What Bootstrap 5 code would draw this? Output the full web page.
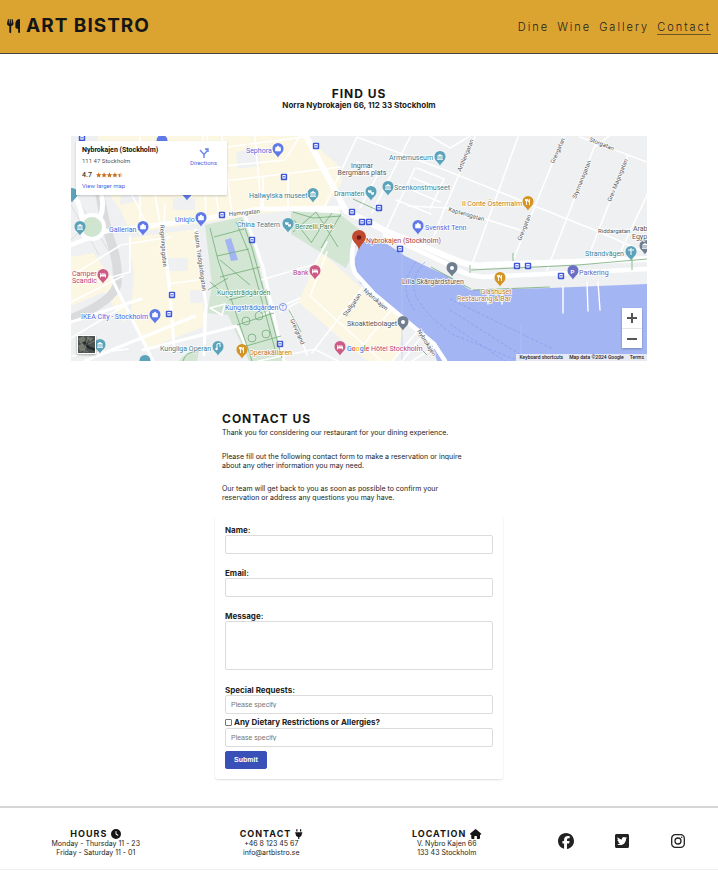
<!DOCTYPE html>
<html lang="en">
<head>
<meta charset="utf-8">
<meta name="viewport" content="width=device-width, initial-scale=1">
<title>Art Bistro – Contact</title>
<link href="https://cdn.jsdelivr.net/npm/bootstrap@5.3.0/dist/css/bootstrap.min.css" rel="stylesheet">
<style>
  body { font-family: Inter, "Open Sans", sans-serif; font-size: 7px; line-height: 9px; color: #222; background: #fff; }
  .site-header { background: #dba330; border-bottom: 1px solid #444; height: 54px; padding: 0 7px 2px; }
  .brand { font-size: 19px; line-height: 24px; font-weight: 700; letter-spacing: 1px; color: #161616; gap: 6px; }
  .brand svg { width: 13px; height: 14px; }
  .site-nav { gap: 8px; margin-top: 5px; }
  .site-nav a { font-size: 11px; line-height: 13px; letter-spacing: 2px; font-weight: 300; color: #222; text-decoration: none; border-bottom: 1px solid transparent; }
  .site-nav a.active { border-bottom-color: #6b5426; }
  h1, h2 { font-size: 12px; line-height: 14px; font-weight: 700; letter-spacing: 1px; color: #161616; margin: 0; }
  .find-us { padding: 33px 71px 0; }
  .address { font-size: 8px; line-height: 9px; font-weight: 700; margin-bottom: 26px; }
  .map-frame { height: 225px; font-family: Roboto, sans-serif; background: #eef0f2; }
  .map-frame > svg { width: 100%; height: 100%; }
  .place-card { top: 5px; left: 5px; width: 151px; height: 54px; background: #fff; box-shadow: 0 1px 2px #0003; padding: 5px 6px; line-height: 9px; }
  .place-name { font-size: 7px; font-weight: 700; color: #111; white-space: nowrap; }
  .map-frame a { color: #4a6ae0; text-decoration: none; font-size: 6px; }
  .place-detail { font-size: 6px; line-height: 11px; color: #555; }
  .rating { font-size: 7px; line-height: 12px; font-weight: 500; color: #333; margin-top: 3px; }
  .rating svg { width: 27px; height: 6px; }
  .directions { padding: 2px 4px 0 0; }
  .zoom-box { right: 5px; bottom: 13px; width: 20px; background: #fff; box-shadow: 0 1px 2px #0004; }
  .zoom-box button { height: 20px; border: 0; background: none; padding: 0; }
  .zoom-box button + button { border-top: 1px solid #e4e4e4; }
  .zoom-box svg { width: 10px; height: 10px; }
  .layer-thumb { left: 6px; bottom: 7px; width: 19px; height: 19px; border: 1px solid #fff; padding: 0; box-shadow: 0 1px 2px #0005; }
  .map-legal { right: 0; bottom: 0; font-size: 5px; line-height: 7px; background: #f1f1f3e0; gap: 6px; padding: 0 3px; }
  .map-legal a, .map-legal span { font-size: 5px; color: #222; font-weight: 500; }
  .contact-us { width: 288px; margin: 51px auto 27px; }
  .intro { padding: 0 7px; margin-bottom: 14px; }
  .intro h2 { margin-bottom: 2px; }
  .intro p { margin-bottom: 14px; max-width: 250px; }
  .intro p:first-of-type { margin-bottom: 15px; }
  .booking-form { padding: 10px; border-radius: 3px; box-shadow: 0 1px 2px #0002; height: auto; }
  .booking-form label { display: block; font-size: 8px; line-height: 9px; font-weight: 700; }
  .booking-form .form-control { font-family: "Liberation Sans", sans-serif; font-size: 7px; line-height: 9px; height: 19px; min-height: 19px; padding: 4px 5px; border: 1px solid #dcdcdc; border-radius: 2px; display: block; }
  .booking-form .form-control::placeholder { color: #757575; }
  .booking-form textarea.form-control { height: 49px; resize: none; margin-bottom: 16px; }
  .field { margin-bottom: 15px; }
  .diet { gap: 2px; margin: 4px 0 1px; }
  .diet input { width: 7px; height: 7px; margin: 0; appearance: none; border: 1px solid #777; border-radius: 1px; background: #fff; }
  .diet input:checked { background: #3850b7; }
  .btn-send { font-family: "Liberation Sans", sans-serif; font-size: 7px; line-height: 10px; font-weight: 700; padding: 3px 8px; margin-top: 4px; border-radius: 2px; background: #3850b7; border-color: #3850b7; color: #fff; }
  .site-footer { border-top: 2px solid #d6d6d6; border-bottom: 1px solid #eee; padding: 21px 8px 12px; text-align: center; }
  .site-footer h2 { font-size: 9px; line-height: 10px; gap: 4px; }
  .site-footer h2 svg { height: 10px; width: auto; }
  .socials { gap: 40px; padding-bottom: 4px; }
  .socials svg { width: 16px; height: 16px; display: block; }
  .socials a { color: #222; }
</style>
</head>
<body>
<header class="site-header d-flex justify-content-between align-items-center">
  <div class="brand d-flex align-items-center">
    <svg viewBox="0 0 448 512" preserveAspectRatio="none" fill="#161616" aria-hidden="true"><path d="M416 0C400 0 288 32 288 176V288c0 35.3 28.7 64 64 64h32V480c0 17.7 14.3 32 32 32s32-14.3 32-32V32c0-17.7-14.3-32-32-32zM64 16C64 7.8 57.9 1 49.7 .1S34.2 4.6 32.4 12.5L2.1 148.8C.7 155.1 0 161.5 0 167.9c0 45.9 35.1 83.6 80 87.7V480c0 17.7 14.3 32 32 32s32-14.3 32-32V255.6c44.9-4.1 80-41.8 80-87.7c0-6.4-.7-12.8-2.1-19.1L191.6 12.5c-1.8-8-9.3-13.3-17.4-12.4S160 7.8 160 16V150.2c0 5.4-4.4 9.8-9.8 9.8c-5.1 0-9.3-3.9-9.8-9L127.9 14.6C127.2 6.3 120.3 0 112 0s-15.2 6.3-15.9 14.6L83.7 151c-.5 5.1-4.7 9-9.8 9c-5.4 0-9.8-4.4-9.8-9.8V16z"/></svg>
    <span>ART BISTRO</span>
  </div>
  <nav class="site-nav d-flex" aria-label="Main">
    <a href="#">Dine</a><a href="#">Wine</a><a href="#">Gallery</a><a href="#" class="active" aria-current="page">Contact</a>
  </nav>
</header>

<main>
<section class="find-us text-center">
  <h1>FIND US</h1>
  <p class="address">Norra Nybrokajen 66, 112 33 Stockholm</p>
  <div class="map-frame position-relative overflow-hidden text-start">
    <svg viewBox="71 136 576 225" preserveAspectRatio="xMidYMid slice" role="img" aria-label="Map of central Stockholm">
      <defs>
        <path id="pin" d="M0 8.500C-1.200 5.500-5.500 4-5.500-.5A5.500 5.500 0 0 1 5.500-.5C5.500 4 1.200 5.500 0 8.500z"/>
        <g id="bag"><path d="M-2.500-1.500h5V2h-5zM-1.200-1.500a1.200 1.400 0 0 1 2.400 0" fill="#fff" stroke="#fff" stroke-width=".6"/></g>
        <g id="museum" fill="#fff"><path d="M-3-1L0-3 3-1v.6h-6zM-2.400 0h1v2h-1zM-.5 0h1v2h-1zM1.400 0h1v2h-1zM-3 2.200h6V3h-6z"/></g>
        <g id="bed" fill="#fff"><path d="M-3-2h.8v2H3v2.400h-.8V1.400h-4.400v1H-3zM-1.700-1.500h3.700q1 .2 1 1.200h-4.700z"/></g>
        <g id="fork" stroke="#fff" stroke-width=".9" fill="none"><path d="M-1.500-3v6M-2.500-3v2h2v-2M1.500 3v-6q-1 1-1 3h1"/></g>
        <g id="mask" fill="#fff"><path d="M-3-2q2 .8 3.500 0v2q-1.500 2-3.500 0zM0 0q2 .8 3 0v2q-1.500 1.700-3 0z"/></g>
        <g id="bus"><rect x="-3.200" y="-3.200" width="6.400" height="6.400" rx="1" fill="#4058d6"/><rect x="-1.600" y="-2" width="3.200" height="3.600" fill="#fff"/><path d="M-1.100-.2h2.200" stroke="#4058d6"/></g>
      </defs>
      <!-- ground -->
      <rect x="71" y="136" width="576" height="225" fill="#eef0f2"/>
      <g fill="#fcf7e3">
        <path d="M98 136h207l32 28 5 18-17 26-58 5-58 9-78 11-10-22-28-40z"/>
        <path d="M71 257l22-4 19 25 20 38-8 6-20-30-33 14z"/>
        <path d="M128 238l68-9 8 84-1 14-57 22-15-37 3-40z"/>
        <path d="M322 252l37 34 36 24 9 20-9 31h-28l-69-59z"/>
      </g>
      <g fill="#eef0f2">
        <path d="M168 258h20v13h-20zM190 290h13v13h-13zM236 152l24-4v18l-22 3zM122 180l20 20-22 5zM173 198h22v12h-22z"/>
      </g>
      <g fill="#d2e6d3">
        <path d="M205 225l37-8 12 29 12 49 18 66h-35l-21-46-21-2 5-28z"/>
        <path d="M291 210l46 2 23 18-3 15-11 23-34-21-21-13z"/>
        <path d="M630 336l17-8v33h-17zM179 361q8-11 20-10l-2 10z"/>
      </g>
      <!-- water -->
      <path d="M360 244l12-5 15 5 18 12 25 12 20 9 20 13 80-2 97-4v77H437l-5-16-39-37-33-25-6-13 1-12z" fill="#a3b5f3"/>
      <path d="M225 240l6-2 7 22-7 1z" fill="#a3b5f3"/>
      <path d="M402 245v116M521 325v36" stroke="#b8c5f5" stroke-width=".6"/>
      <g fill="none" stroke="#8396e8" stroke-width=".6" stroke-dasharray="3 2">
        <path d="M425 262q-18 20-7 38t36 35l65 26M416 262q-20 25 0 50M450 299l103 50M450 324l55 37M450 310l80 51"/>
      </g>
      <!-- railway -->
      <g fill="none" stroke="#dadbdd" stroke-width="9"><path d="M100 195q5 30 12 50t5 40q-4 16-46 34"/></g>
      <path d="M71 205l28 50M75 195l36 60M71 240l20-20" stroke="#dcdddf" stroke-width="1" fill="none"/>
      <!-- streets -->
      <g fill="none" stroke="#fff" stroke-linecap="round" stroke-linejoin="round">
        <g stroke-width="1.600">
          <path d="M227 147l78-10M225 181l115-14M263 177v32M288 173v34M357 137l-34 73M379 172l-19 36M357 137l93 35 147 59 50 22M373 170l-16-8M378 175l-26-12"/>
          <path d="M207 136l12 78M222 136l10 78M140 137v97M155 195l9 50 10 95M163 245l2-40M115 161l30 60"/>
          <path d="M203 136l3 76M255 136l6 70M168 284l36-5M71 276l50-31 50-8M112 277l18-5v-36M71 302l52-26M71 338l60-36M128 349l-56 7M300 136l-15 24-80 8"/>
          <path d="M410 137l-38 76M475 137l-32 75-9 24M518 137l-48 133M563 137l-49 121M597 140l-50 130M628 155l-39 100M647 195l-28 60M415 168l-28 60M580 137l67 25M609 136l-13 10M400 185l40 17M396 200l35 14M417 168l27 11-14 30M413 178l25 10M450 208l70 22M408 206l42 2M470 136l-20 12-20-12"/>
          <path d="M261 280l54-16 12-22M327 252l-17 44 72 65M362 288l-50 65M391 310l-26 33M417 332l-25 29M424 334l-22 27M412 361l23-14M290 310l17 45M262 315l38-17M298 302l-18 10"/>
          <path d="M204 341v-28M210 308l12 7 3-11zM258 361l58-12M316 350l22 11"/>
        </g>
        <path stroke-width="3" d="M111 277l42 84M143 350l94-24 8 18M163 235l6 45 5 65M196 230l10 75-2 50M245 215l18 52 21 94M338 212l-58-3M71 322l70-23M85 361l110-45"/>
        <path stroke-width="4.500" d="M71 245l36-14 97-12 54-10 82-1"/>
        <circle cx="92" cy="227" r="12" stroke-width="4"/>
        <path stroke-width="5" d="M82 218q-2-18-11-25M100 218q8-20-8-46"/>
        <path stroke-width="6" d="M306 136l40 75 40 20 70 29q15 7 30 5l161-6"/>
        <path stroke-width="4.500" d="M357 232q-9 25-2 41l19 21 60 50 11 17M385 235l60 28q20 13 38 14l164-8"/>
        <path stroke-width="1.400" d="M563 287v26M587 282l1 29M598 282l2 28M488 295v9M502 295v9"/>
      </g>
      <circle cx="92" cy="227" r="10" fill="#cfe5d0"/>
      <!-- park paths -->
      <g fill="none" stroke="#74ac79" stroke-width=".8">
        <path d="M210 228l8 32 34 101M236 222l13 31 27 100M242 220l10 28 30 110M217 256l32-7M214 237l30-8M220 277l40-10M229 300l38-10M237 325l37-12M246 346l35-10M220 260l30 25M208 290l20-12M210 282l18 16"/>
        <circle cx="246" cy="321" r="4"/><circle cx="259" cy="316" r="4"/><circle cx="252" cy="338" r="4"/><circle cx="266" cy="334" r="4"/>
        <path d="M293 212l20 6 28-2M293 232l23-20 22 35M300 226l20 3 12-16M320 229l-9 14M341 214l-20 34M294 220l17 22M353 199l24 11M471 270l107-5 69-6M471 289l-40-22M473 290l77-3M183 361q2-9 15-10M289 310l12 22M470 273v-8M513 253v8M632 258v12M417 345l10 10"/>
      </g>
      <!-- transit -->
      <g>
        <use href="#bus" x="316" y="146"/><use href="#bus" x="284" y="177"/><use href="#bus" x="222" y="215"/><use href="#bus" x="252" y="240"/><use href="#bus" x="352" y="212"/><use href="#bus" x="362" y="222"/><use href="#bus" x="369" y="222"/><use href="#bus" x="379" y="208"/><use href="#bus" x="400" y="249"/><use href="#bus" x="172" y="295"/><use href="#bus" x="169" y="314"/><use href="#bus" x="517" y="266"/><use href="#bus" x="528" y="266"/><use href="#bus" x="561" y="276"/><use href="#bus" x="280" y="344"/><use href="#bus" x="82" y="138"/>
      </g>
      <!-- pins -->
      <g fill="#5f7ae8"><use href="#pin" x="278" y="149"/><use href="#pin" x="201" y="218"/><use href="#pin" x="143" y="227"/><use href="#pin" x="418" y="226"/><use href="#pin" x="155" y="315"/><use href="#pin" x="187" y="192"/><use href="#pin" x="162" y="141"/></g>
      <g><use href="#bag" x="278" y="149"/><use href="#bag" x="201" y="218"/><use href="#bag" x="143" y="227"/><use href="#bag" x="418" y="226"/><use href="#bag" x="155" y="315"/></g>
      <g fill="#5aa3ba"><use href="#pin" x="440" y="157"/><use href="#pin" x="388" y="187"/><use href="#pin" x="371" y="192"/><use href="#pin" x="313" y="194"/><use href="#pin" x="288" y="224"/><use href="#pin" x="80" y="227"/><use href="#pin" x="631" y="252"/><use href="#pin" x="218" y="347"/><use href="#pin" x="100" y="345"/><use href="#pin" x="145" y="361"/><use href="#pin" x="72" y="194"/></g>
      <use href="#museum" x="440" y="157"/><use href="#museum" x="388" y="187"/><use href="#museum" x="313" y="194"/><use href="#museum" x="80" y="227"/><use href="#mask" x="371" y="192"/><use href="#mask" x="288" y="224"/><use href="#museum" x="100" y="345"/>
      <path d="M631 255v-7M628 250h6M217 349v-5l3-1v4" stroke="#fff" fill="none"/><circle cx="216.500" cy="349" r="1.200" fill="#fff"/>
      <g fill="#cc5c86"><use href="#pin" x="103" y="275"/><use href="#pin" x="315" y="271"/><use href="#pin" x="340" y="347"/></g>
      <use href="#bed" x="103" y="275"/><use href="#bed" x="315" y="271"/><use href="#bed" x="340" y="347"/>
      <g fill="#d59424"><use href="#pin" x="528" y="202"/><use href="#pin" x="500" y="278"/><use href="#pin" x="242" y="350"/></g>
      <use href="#fork" x="528" y="202"/><use href="#fork" x="500" y="278"/><use href="#fork" x="242" y="350"/>
      <g fill="#6f7f8f"><use href="#pin" x="452" y="268"/><use href="#pin" x="403" y="322"/><use href="#pin" x="645" y="246"/></g>
      <circle cx="452" cy="268" r="2" fill="#fff"/><circle cx="403" cy="322" r="2" fill="#fff"/><use href="#museum" x="645" y="246"/>
      <use href="#pin" x="573" y="271" fill="#6c70c4"/>
      <path d="M359 250C358 244 352 242 352 237a7 7 0 0 1 14 0C366 242 360 244 359 250z" fill="#c0492f"/><circle cx="359" cy="237.500" r="2.300" fill="#6d1a12"/>
      <!-- labels -->
      <g font-family="Roboto, sans-serif" font-size="7" fill="#555" stroke="#fff" stroke-width="1.400" stroke-linejoin="round" paint-order="stroke">
        <g fill="#4a68dc"><text x="246" y="153">Sephora</text><text x="175" y="222">Uniqlo</text><text x="109" y="232">Gallerian</text><text x="425" y="230">Svenskt Tenn</text><text x="81" y="319">IKEA City - Stockholm</text><text x="225" y="310">Kungsträdgården</text></g>
        <g fill="#397f92"><text x="389" y="160">Armémuseum</text><text x="394" y="190">Scenkonstmuseet</text><text x="334" y="196">Dramaten</text><text x="249" y="198">Hallwylska museet</text><text x="237" y="227">China Teatern</text><text x="585" y="256">Strandvägen</text><text x="160" y="351">Kungliga Operan</text></g>
        <g fill="#45834a"><text x="295" y="229">Berzelii Park</text><text x="217" y="295">Kungsträdgården</text></g>
        <g fill="#b9426f"><text x="72" y="276">Camper</text><text x="72" y="283">Scandic</text><text x="293" y="275">Bank</text><text x="371" y="351">Hôtel Stockholm</text></g>
        <g fill="#c07a17"><text x="462" y="206">Il Conte Östermalm</text><text x="496" y="294" text-anchor="middle">Glashuset</text><text x="484" y="301" text-anchor="middle">Restaurang &amp; Bar</text><text x="249" y="355">Operakällaren</text></g>
        <g><text x="362" y="168" text-anchor="middle">Ingmar</text><text x="362" y="175" text-anchor="middle">Bergmans plats</text><text x="402" y="284">Lilla Skärgårdsturen</text><text x="347" y="326">Skoaktiebolaget</text><text x="633" y="231">Arab</text><text x="632" y="239">Egyp</text></g>
        <text x="579" y="275" fill="#6266b8">Parkering</text>
        <text x="366" y="243" fill="#b23a2a">Nybrokajen (Stockholm)</text>
        <g font-size="6">
          <text transform="translate(229 216) rotate(-5)">Hamngatan</text>
          <text transform="translate(160 225) rotate(86)">Regeringsgatan</text>
          <text transform="translate(194 231) rotate(82)">Västra Trädgårdsgatan</text>
          <text transform="translate(290 320) rotate(66)">Grevgränd</text>
          <text transform="translate(346 317) rotate(-55)">Stallgatan</text>
          <text transform="translate(363 291) rotate(41)">Nybrokajen</text>
          <text transform="translate(417 331) rotate(58)">Nybrokajen</text>
          <text transform="translate(461 172) rotate(-68)">Artillerigatan</text>
          <text transform="translate(554 164) rotate(-66)">Grevgatan</text>
          <text transform="translate(521 241) rotate(-68)">Grevgatan</text>
          <text transform="translate(576 199) rotate(-68)">Styrmansgatan</text>
          <text transform="translate(611 202) rotate(-68)">Grev Magnigatan</text>
          <text transform="translate(589 141) rotate(22)">Storgatan</text>
          <text transform="translate(448 211) rotate(16)">Kaptensgatan</text>
          <text x="598" y="233">Riddargatan</text>
        </g>
      </g>
      <text x="570.600" y="273.500" font-size="6" font-weight="700" fill="#fff">P</text>
      <circle cx="283" cy="307" r="3.500" fill="#fff" stroke="#4a68dc" stroke-width=".7"/><text x="281.300" y="309" font-size="5" fill="#4a68dc">T</text>
      <text x="347" y="351" font-family="Roboto, sans-serif" font-size="7" font-weight="500" stroke="#fff" stroke-width=".8" paint-order="stroke"><tspan fill="#4285f4">G</tspan><tspan fill="#ea4335">o</tspan><tspan fill="#fbbc05">o</tspan><tspan fill="#4285f4">g</tspan><tspan fill="#34a853">l</tspan><tspan fill="#ea4335">e</tspan></text>
    </svg>

    <div class="place-card position-absolute d-flex justify-content-between">
      <div>
        <div class="place-name">Nybrokajen (Stockholm)</div>
        <div class="place-detail">111 47 Stockholm</div>
        <div class="rating d-flex align-items-center gap-1"><span>4.7</span>
          <svg viewBox="0 0 50 10" fill="#c4711f" aria-label="4.7 out of 5 stars"><path id="star" d="M5 0l1.500 3.400 3.500.4-2.600 2.400.7 3.600L5 8 1.900 9.800l.7-3.600L0 3.800l3.500-.4z"/><use href="#star" x="10"/><use href="#star" x="20"/><use href="#star" x="30"/><path d="M45 0v8l-3.100 1.800.7-3.600L40 3.800l3.500-.4z"/><path d="M45 0l1.500 3.400 3.500.4-2.600 2.400.7 3.600L45 8z" fill="#e2c3a3"/></svg>
        </div>
        <a href="#">View larger map</a>
      </div>
      <a href="#" class="directions d-flex flex-column align-items-center">
        <svg width="10" height="10" viewBox="0 0 20 20" fill="none" stroke="#6b8be6" stroke-width="3" aria-hidden="true"><path d="M10 20v-7L2 4M10 13l6-7" /><path d="M12 2h6v6" fill="#6b8be6"/></svg>
        Directions
      </a>
    </div>

    <button class="layer-thumb position-absolute" type="button" aria-label="Satellite view">
      <svg class="d-block w-100 h-100" viewBox="0 0 18 18"><path fill="#4c5150" d="M0 0h18v18H0z"/><path d="M0 3l6-3 2 4-5 4zM9 1l7 1-3 4zM0 10l5-2 3 6-6 3z" fill="#777a70"/><path d="M5 7l4-1 3 5 6 2v3l-8-3z" fill="#20292c"/><path d="M1 6l8 6M11 0L6 18M10 9l8-4M3 14l8 3" stroke="#949488" stroke-width=".6"/></svg>
    </button>
    <div class="zoom-box position-absolute d-flex flex-column">
      <button type="button" aria-label="Zoom in"><svg viewBox="0 0 10 10" stroke="#555" stroke-width="2"><path d="M5 0v10M0 5h10"/></svg></button>
      <button type="button" aria-label="Zoom out"><svg viewBox="0 0 10 10" stroke="#555" stroke-width="2"><path d="M0 5h10"/></svg></button>
    </div>
    <div class="map-legal position-absolute d-flex"><a href="#">Keyboard shortcuts</a><span>Map data ©2024 Google</span><a href="#">Terms</a></div>
  </div>
</section>

<section class="contact-us">
  <div class="intro">
    <h2>CONTACT US</h2>
    <p>Thank you for considering our restaurant for your dining experience.</p>
    <p>Please fill out the following contact form to make a reservation or inquire about any other information you may need.</p>
    <p>Our team will get back to you as soon as possible to confirm your reservation or address any questions you may have.</p>
  </div>
  <form class="booking-form">
    <div class="field"><label for="name">Name:</label><input class="form-control" id="name" type="text"></div>
    <div class="field"><label for="email">Email:</label><input class="form-control" id="email" type="email"></div>
    <div><label for="message">Message:</label><textarea class="form-control" id="message"></textarea></div>
    <label for="requests">Special Requests:</label><input class="form-control" id="requests" type="text" placeholder="Please specify">
    <div class="diet d-flex align-items-center"><input type="checkbox" id="diet"><label for="diet">Any Dietary Restrictions or Allergies?</label></div>
    <input class="form-control" type="text" placeholder="Please specify" aria-label="Dietary restrictions or allergies">
    <button class="btn btn-send" type="submit">Submit</button>
  </form>
</section>
</main>

<footer class="site-footer">
  <div class="row g-0">
    <div class="col-3">
      <h2 class="d-flex justify-content-center">HOURS <svg viewBox="0 0 512 512" fill="#161616" aria-hidden="true"><path fill-rule="evenodd" d="M256 0a256 256 0 1 1 0 512A256 256 0 1 1 256 0zM232 120V256c0 8 4 15.500 10.700 20l96 64c11 7.400 25.900 4.400 33.300-6.700s4.400-25.900-6.700-33.300L280 243.200V120c0-13.300-10.700-24-24-24s-24 10.700-24 24z"/></svg></h2>
      <div>Monday - Thursday 11 - 23</div><div>Friday - Saturday 11 - 01</div>
    </div>
    <div class="col-3">
      <h2 class="d-flex justify-content-center">CONTACT <svg viewBox="0 0 384 512" fill="#161616" aria-hidden="true"><path d="M96 0C78.300 0 64 14.300 64 32v96h64V32c0-17.700-14.300-32-32-32zM288 0c-17.700 0-32 14.300-32 32v96h64V32c0-17.700-14.300-32-32-32zM32 160c-17.700 0-32 14.300-32 32s14.300 32 32 32v32c0 77.400 55 142 128 156.800V480c0 17.700 14.300 32 32 32s32-14.300 32-32V412.800C297 398 352 333.400 352 256V224c17.700 0 32-14.300 32-32s-14.300-32-32-32H32z"/></svg></h2>
      <div>+46 8 123 45 67</div><div>info@artbistro.se</div>
    </div>
    <div class="col-3">
      <h2 class="d-flex justify-content-center">LOCATION <svg viewBox="0 0 576 512" fill="#161616" aria-hidden="true"><path d="M288 0q12 0 22 8l256 224q14 16 8 32-8 24-30 24h-32v176q0 48-48 48H376q-24 0-24-24V376q0-24-24-24h-80q-24 0-24 24v112q0 24-24 24h-88q-48 0-48-48V288H32q-22 0-30-24-6-16 8-32L266 8q10-8 22-8z"/></svg></h2>
      <div>V. Nybro Kajen 66</div><div>133 43 Stockholm</div>
    </div>
    <div class="col-3 socials d-flex justify-content-center align-items-center">
      <a href="#" aria-label="Facebook"><svg viewBox="0 0 512 512" fill="currentColor"><path d="M512 256C512 114.600 397.400 0 256 0S0 114.600 0 256C0 376 82.700 476.800 194.200 504.500V334.200H141.400V256h52.800V222.300c0-87.100 39.400-127.500 125-127.500c16.200 0 44.200 3.200 55.700 6.400V172c-6-.6-16.500-1-29.600-1c-42 0-58.200 15.900-58.200 57.200V256h83.600l-14.400 78.200H287V510.100C413.800 494.800 512 386.900 512 256z"/></svg></a>
      <a href="#" aria-label="Twitter"><svg viewBox="-32 0 512 512" fill="currentColor"><path d="M400 32H48C21.500 32 0 53.500 0 80v352c0 26.500 21.500 48 48 48h352c26.500 0 48-21.500 48-48V80c0-26.500-21.500-48-48-48zm-48.900 158.800c.2 2.800.2 5.700.2 8.500 0 86.700-66 186.600-186.600 186.600-37.200 0-71.700-10.800-100.700-29.400 5.300.6 10.400.8 15.800.8 30.700 0 58.900-10.400 81.400-28-28.800-.6-53-19.500-61.300-45.500 10.100 1.500 19.200 1.500 29.600-1.200-30-6.100-52.500-32.500-52.500-64.400v-.8c8.700 4.900 18.900 7.900 29.600 8.300a65.400 65.400 0 0 1-29.200-54.600c0-12.200 3.200-23.400 8.900-33.100 32.300 39.800 80.800 65.800 135.200 68.600-9.300-44.500 24-80.600 64-80.600 18.900 0 35.900 7.900 47.900 20.700 14.800-2.800 29-8.300 41.600-15.800-4.900 15.200-15.200 28-28.800 36.100 13.200-1.400 26-5.100 37.800-10.200-8.900 13.100-20.100 24.700-32.900 34z"/></svg></a>
      <a href="#" aria-label="Instagram"><svg viewBox="0 0 16 16" fill="none" stroke="currentColor" stroke-width="1.300"><rect x="1.700" y="1.700" width="12.600" height="12.600" rx="3.600"/><circle cx="8" cy="8" r="3"/><circle cx="11.700" cy="4.300" r=".8" fill="currentColor" stroke="none"/></svg></a>
    </div>
  </div>
</footer>
<script src="https://cdn.jsdelivr.net/npm/bootstrap@5.3.0/dist/js/bootstrap.bundle.min.js"></script>
</body>
</html>
